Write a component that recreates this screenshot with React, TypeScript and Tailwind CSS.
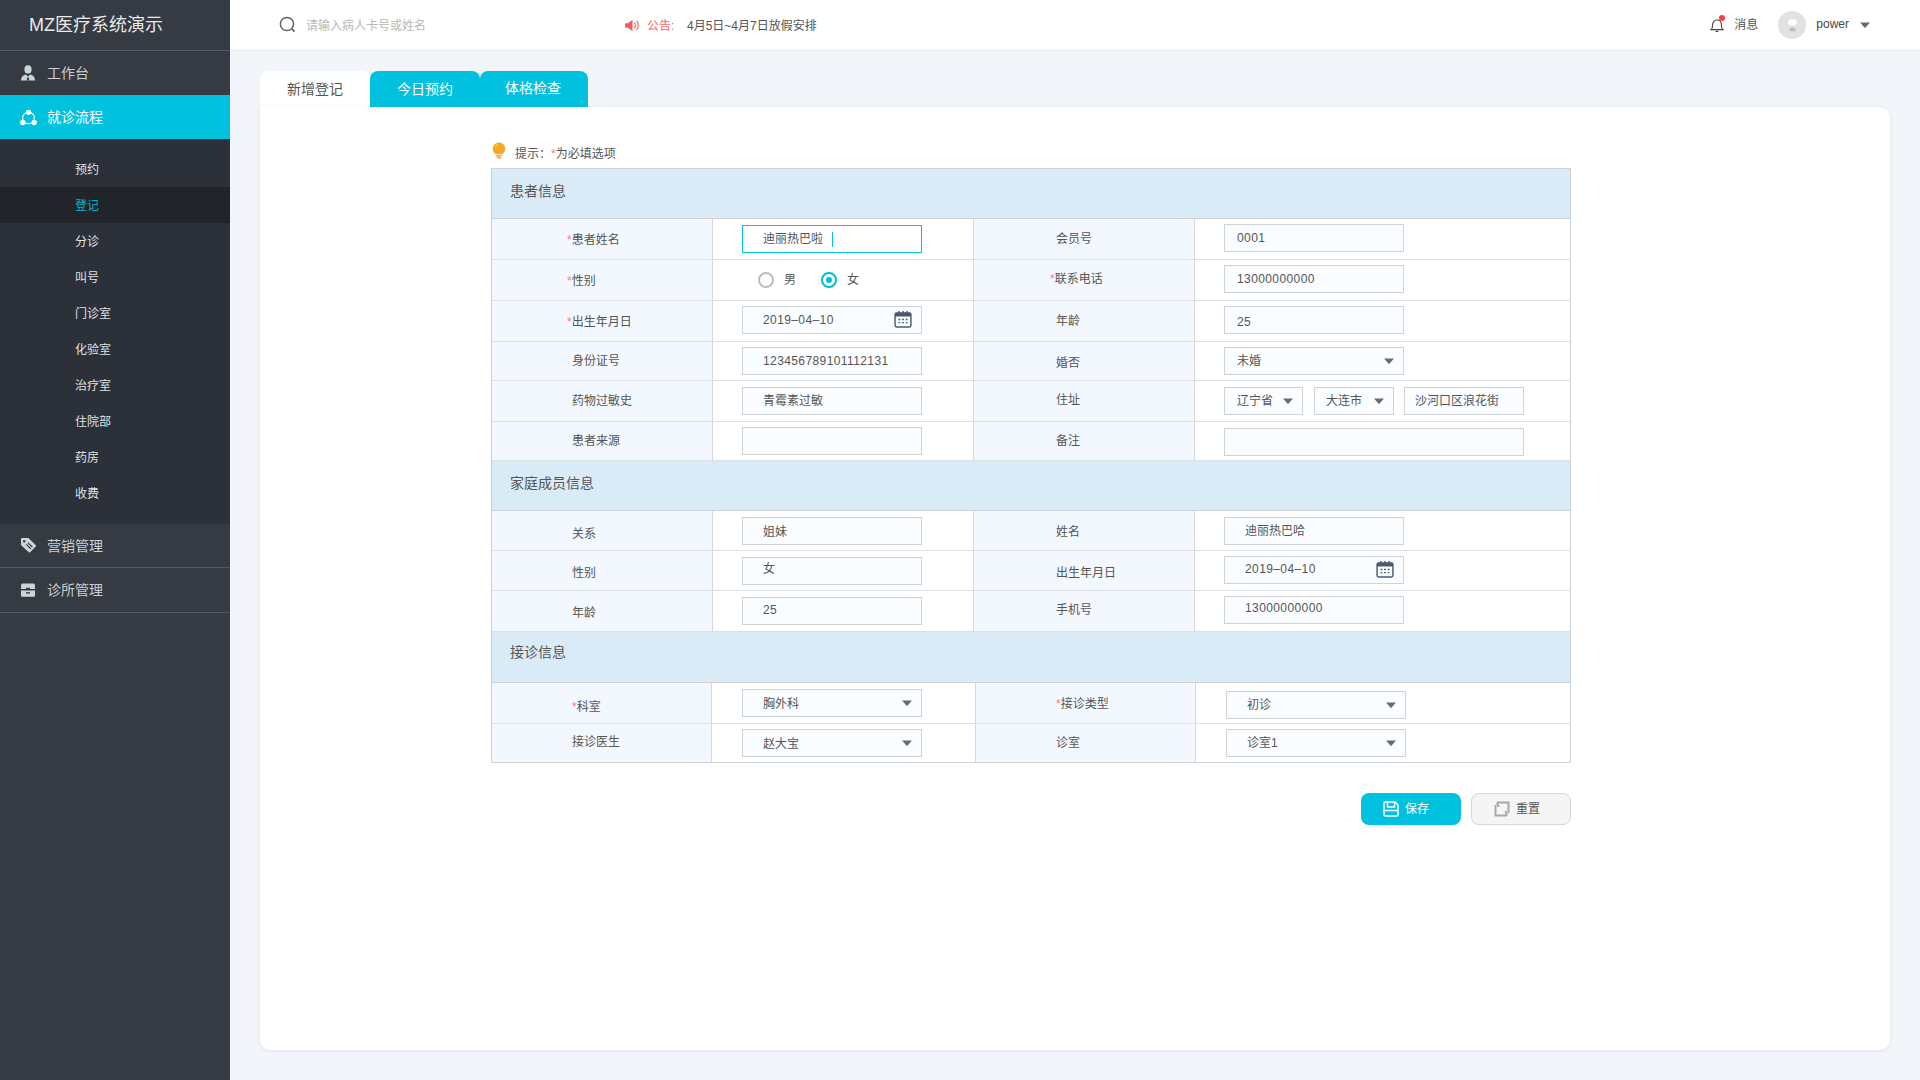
import React from "react";

const FONT = "font-['Liberation_Sans','Noto_Sans_CJK_SC',sans-serif]";

const Caret = ({ className = "" }: { className?: string }) => (
  <svg viewBox="0 0 10 6" className={`h-[6px] w-[10px] ${className}`}>
    <path d="M0 0.5h10L5.6 5.6a.8.8 0 0 1-1.2 0z" fill="#6b6b6b" />
  </svg>
);

const Calendar = () => (
  <svg viewBox="0 0 20 20" className="h-[18px] w-[18px]" fill="none">
    <rect x="1.2" y="3.2" width="17.6" height="15.6" rx="1.6" stroke="#4a5a70" strokeWidth="1.6" />
    <rect x="1.2" y="3.2" width="17.6" height="4" fill="#4a5a70" />
    <path d="M5.5 1v4M10 1v4M14.5 1v4" stroke="#4a5a70" strokeWidth="1.6" />
    <path d="M5 10.5h2M9 10.5h2M13 10.5h2M5 14h2M9 14h2M13 14h2" stroke="#4a5a70" strokeWidth="1.6" />
  </svg>
);

type MainIcon = "user" | "flow" | "tag" | "box";

const SideIcon = ({ name, color }: { name: MainIcon; color: string }) => {
  if (name === "user")
    return (
      <svg viewBox="0 0 16 16" className="h-4 w-4" fill={color}>
        <ellipse cx="8" cy="4.4" rx="3.6" ry="4.2" />
        <path d="M1 15.6c0-3.8 1.800-5.600 4.600-6.200L8 11.400l2.400-2c2.800.6 4.600 2.400 4.600 6.200z" />
        <path d="M7.200 12.400h1.600l.4 3.200H6.800z" fill="#353a43" />
      </svg>
    );
  if (name === "flow")
    return (
      <svg viewBox="0 0 18 17" className="h-[17px] w-[17px]" fill={color}>
        <circle cx="9" cy="9" r="6.200" fill="none" stroke={color} strokeWidth="1.100" />
        <circle cx="9" cy="3" r="2.800" />
        <circle cx="3" cy="13.800" r="2.800" />
        <circle cx="15" cy="13.800" r="2.800" />
      </svg>
    );
  if (name === "tag")
    return (
      <svg viewBox="0 0 17 17" className="h-[17px] w-[17px]">
        <path d="M1 1.800C1 1.300 1.300 1 1.800 1H8c.4 0 .7.1 1 .4l6.800 6.800c.4.4.4 1 0 1.400l-5.600 5.600c-.4.4-1 .4-1.400 0L1.400 8.600C1.100 8.300 1 8 1 7.600z" fill={color} />
        <path d="M8 5.800l4.400 4.400M6.400 7.400l4.400 4.400" stroke="#353a43" strokeWidth="1.200" />
        <circle cx="4.200" cy="4.200" r="1.200" fill="#353a43" />
      </svg>
    );
  return (
    <svg viewBox="0 0 16 16" className="h-4 w-4" fill={color}>
      <path d="M1 3.400C1 2 2 1.400 3 1.400h10c1 0 2 .6 2 2V7H1z" />
      <path d="M1 8.400h14v5c0 .9-.6 1.400-1.400 1.400H2.400C1.600 14.800 1 14.300 1 13.400z" />
      <rect x="6" y="5.800" width="4" height="1.400" fill="#353a43" />
      <rect x="6" y="10.200" width="4" height="1.400" fill="#353a43" />
    </svg>
  );
};

const SubItem = ({ text, active }: { text: string; active?: boolean }) => (
  <div className={`flex h-9 items-center pl-[75px] pt-[1px] text-xs ${active ? "bg-[#212429] text-[#00b5d1]" : "text-[#dfe3e6]"}`}>{text}</div>
);

const NavItem = ({ icon, text, active, border, h }: { icon: MainIcon; text: string; active?: boolean; border?: boolean; h: string }) => (
  <div className={`flex items-center ${h} ${active ? "bg-[#00c1de] text-white" : "text-[#c8d0d2]"} ${border ? "border-b border-[#545963]" : ""}`}>
    <div className="flex w-[47px] justify-start pl-[20px]">
      <SideIcon name={icon} color={active ? "#ffffff" : "#c8d6d6"} />
    </div>
    <span className="text-sm">{text}</span>
  </div>
);

const Sidebar = () => (
  <aside className="flex w-[230px] shrink-0 flex-col bg-[#353a43]">
    <div className="flex h-[51px] items-center border-b border-[#545963] pl-[29px] pt-[1px] text-[18px] text-[#e8eaec]">MZ医疗系统演示</div>
    <NavItem icon="user" text="工作台" h="h-[44px]" />
    <NavItem icon="flow" text="就诊流程" active h="h-[44px]" />
    <div className="bg-[#2c3038] pt-3 pb-[13px]">
      <SubItem text="预约" />
      <SubItem text="登记" active />
      {["分诊", "叫号", "门诊室", "化验室", "治疗室", "住院部", "药房", "收费"].map((t) => (
        <SubItem key={t} text={t} />
      ))}
    </div>
    <NavItem icon="tag" text="营销管理" border h="h-[44px]" />
    <NavItem icon="box" text="诊所管理" border h="h-[45px]" />
  </aside>
);

const Header = () => (
  <header className="flex h-[51px] shrink-0 items-center border-b border-[#e8edf0] bg-white text-xs">
    <svg viewBox="0 0 18 18" className="ml-[49px] h-[18px] w-[18px]" fill="none" stroke="#5f6368">
      <circle cx="8" cy="8" r="6.600" strokeWidth="1.500" />
      <path d="M13 13l2.400 2.600" strokeWidth="1.800" />
    </svg>
    <span className="ml-[9px] w-[319px] translate-y-[1px] text-[#b8b8b8]">请输入病人卡号或姓名</span>
    <svg viewBox="0 0 16 14" className="h-[13px] w-[15px]" fill="#fa5c5c">
      <path d="M0 4.500h3L8 .8v12.400L3 9.500H0z" />
      <path d="M10 3.800c1.500 1.600 1.500 4.800 0 6.400M12.400 2c2.400 2.600 2.400 7.400 0 10" stroke="#fa5c5c" fill="none" strokeWidth="1.200" />
    </svg>
    <span className="ml-[7px] w-[40px] translate-y-[1px] text-[#fa6464]">公告:</span>
    <span className="translate-y-[1px] text-[#555]">4月5日~4月7日放假安排</span>
    <div className="ml-auto flex items-center">
      <div className="relative">
        <svg viewBox="0 0 14 16" className="h-4 w-[14px]" fill="none" stroke="#444">
          <path d="M1 12.600c1.400-1 1.600-2.400 1.600-4.600 0-3 1.800-5 4.400-5s4.400 2 4.400 5c0 2.200.2 3.600 1.600 4.600z" strokeWidth="1.100" />
          <path d="M5.600 14.400h2.800" strokeWidth="1.300" />
        </svg>
        <span className="absolute -right-[1px] -top-[2px] h-[6px] w-[6px] rounded-full bg-[#ff3b46]" />
      </div>
      <span className="ml-[10px] text-[#555]">消息</span>
      <div className="ml-[20px] flex h-[28px] w-[28px] items-center justify-center rounded-full bg-[#e2e2e2]">
        <svg viewBox="0 0 12 16" className="h-[15px] w-[11px]" fill="#ffffff">
          <path d="M1 4.500C1 2.400 3 1.200 6 1.200s5 1.200 5 3.300S9 8.200 6 8.200 1 6.600 1 4.500z" />
          <rect x="3" y="10.400" width="6" height="4" rx="1" fill="#bdbdbd" />
        </svg>
      </div>
      <span className="ml-[10px] -translate-y-[1px] text-[#444]">power</span>
      <Caret className="ml-[11px] mr-[50px]" />
    </div>
  </header>
);

const Star = () => <span className="text-[#fb7a7a]">*</span>;

const Label = ({ text, req, x, dy = "" }: { text: string; req?: boolean; x: string; dy?: string }) => (
  <span className={`${x} ${dy} block whitespace-nowrap`}>
    {req && <Star />}
    {text}
  </span>
);

const inputBase = "flex h-[28px] items-center border text-xs text-[#555]";

const Input = ({ text = "", w = "w-[180px]", pad = "pl-[20px]", dy = "", off = "", digits, arrow, cal, focus }: { text?: string; w?: string; pad?: string; dy?: string; off?: string; digits?: boolean; arrow?: boolean; cal?: boolean; focus?: boolean }) => (
  <div className={`${inputBase} ${w} ${pad} ${off} ${focus ? "border-[#00c1de] bg-white" : "border-[#cfd2d6] bg-[#fafdff]"}`}>
    <span className={`${dy} ${digits ? "tracking-[0.4px]" : ""}`}>{text}</span>
    {focus && <span className="ml-[9px] h-[15px] w-[1px] bg-[#00c1de]" />}
    {cal && (
      <span className="ml-auto mr-[9px] -translate-y-[1px]">
        <Calendar />
      </span>
    )}
    {arrow && <Caret className="ml-auto mr-[9px]" />}
  </div>
);

const Row = ({ l1, v1, l2, v2, h, cols = "a", last }: { l1: React.ReactNode; v1: React.ReactNode; l2: React.ReactNode; v2: React.ReactNode; h: string; cols?: "a" | "b"; last?: boolean }) => {
  const w = cols === "a" ? ["w-[221px]", "w-[261px]", "w-[221px]"] : ["w-[220px]", "w-[264px]", "w-[220px]"];
  const pad = cols === "a" ? "pl-[29px]" : "pl-[30px]";
  return (
    <div className={`flex ${h} text-xs text-[#555] ${last ? "" : "border-b border-[#dcdfe3]"}`}>
      <div className={`${w[0]} flex items-center border-r border-[#d5d8dc] bg-[#f3f8ff]`}>{l1}</div>
      <div className={`${w[1]} ${pad} flex items-center border-r border-[#d5d8dc]`}>{v1}</div>
      <div className={`${w[2]} flex items-center border-r border-[#d5d8dc] bg-[#f3f8ff]`}>{l2}</div>
      <div className={`${pad} flex flex-1 items-center`}>{v2}</div>
    </div>
  );
};

const Section = ({ text, h, pb }: { text: string; h: string; pb: string }) => (
  <div className={`flex ${h} ${pb} items-center border-b border-[#cfd3d7] bg-[#d9ebf7] pl-[18px] text-sm text-[#555]`}>{text}</div>
);

const Radio = ({ on, text, w }: { on?: boolean; text: string; w: string }) => (
  <div className={`flex items-center ${w}`}>
    <span className={`flex h-[16px] w-[16px] items-center justify-center rounded-full border-2 bg-white ${on ? "border-[#00bcd8]" : "border-[#bdbdbd]"}`}>
      {on && <span className="h-[6px] w-[6px] rounded-full bg-[#00bcd8]" />}
    </span>
    <span className="ml-[10px] text-xs text-[#555]">{text}</span>
  </div>
);

const LX = "ml-[75px]";
const LX2 = "ml-[80px]";
const RX = "ml-[82px]";
const RX2 = "ml-[76px]";
const RX3 = "ml-[80px]";
const UP1 = "-translate-y-[1px]";
const DN1 = "translate-y-[1px]";
const DN2 = "translate-y-[2px]";

const Form = () => (
  <div className="w-[1080px] border border-[#cfd2d6] bg-white">
    <Section text="患者信息" h="h-[50px]" pb="pb-[5px]" />
    <Row h="h-[41px]" l1={<Label text="患者姓名" req x={LX} dy={DN1} />} v1={<Input text="迪丽热巴啦" focus />} l2={<Label text="会员号" x={RX} />} v2={<Input text="0001" pad="pl-[12px]" digits off={UP1} />} />
    <Row h="h-[41px]" l1={<Label text="性别" req x={LX} dy={DN1} />} v1={<div className="flex pl-[16px]"><Radio text="男" w="w-[63px]" /><Radio on text="女" w="w-[63px]" /></div>} l2={<Label text="联系电话" req x={RX2} dy={UP1} />} v2={<Input text="13000000000" pad="pl-[12px]" digits off={UP1} />} />
    <Row h="h-[41px]" l1={<Label text="出生年月日" req x={LX} dy={DN1} />} v1={<Input text="2019–04–10" cal digits off={UP1} />} l2={<Label text="年龄" x={RX} />} v2={<Input text="25" pad="pl-[12px]" digits off={UP1} dy={DN2} />} />
    <Row h="h-[39px]" l1={<Label text="身份证号" x={LX2} />} v1={<Input text="123456789101112131" digits />} l2={<Label text="婚否" x={RX} dy={DN2} />} v2={<Input text="未婚" pad="pl-[12px]" arrow />} />
    <Row h="h-[41px]" l1={<Label text="药物过敏史" x={LX2} />} v1={<Input text="青霉素过敏" />} l2={<Label text="住址" x={RX} dy={UP1} />} v2={<div className="flex"><Input text="辽宁省" w="w-[79px]" pad="pl-[12px]" arrow /><div className="ml-[11px]"><Input text="大连市" w="w-[80px]" pad="pl-[11px]" arrow /></div><div className="ml-[10px]"><Input text="沙河口区浪花街" w="w-[120px]" pad="pl-[10px]" /></div></div>} />
    <Row h="h-[39px]" l1={<Label text="患者来源" x={LX2} />} v1={<Input />} l2={<Label text="备注" x={RX} />} v2={<Input w="w-[300px]" off={DN1} />} />
    <Section text="家庭成员信息" h="h-[50px]" pb="pb-[5px]" />
    <Row h="h-[40px]" l1={<Label text="关系" x={LX2} dy="translate-y-[3px]" />} v1={<Input text="姐妹" dy={DN1} />} l2={<Label text="姓名" x={RX} dy={DN1} />} v2={<Input text="迪丽热巴哈" />} />
    <Row h="h-[40px]" l1={<Label text="性别" x={LX2} dy={DN2} />} v1={<Input text="女" dy="-translate-y-[2px]" />} l2={<Label text="出生年月日" x={RX} dy={DN2} />} v2={<Input text="2019–04–10" cal digits off={UP1} dy={UP1} />} />
    <Row h="h-[41px]" l1={<Label text="年龄" x={LX2} dy={DN2} />} v1={<Input text="25" digits dy={UP1} />} l2={<Label text="手机号" x={RX} dy={UP1} />} v2={<Input text="13000000000" digits off={UP1} dy="-translate-y-[2px]" />} />
    <Section text="接诊信息" h="h-[51px]" pb="pb-[10px]" />
    <Row cols="b" h="h-[41px]" l1={<Label text="科室" req x={LX2} dy="translate-y-[4px]" />} v1={<Input text="胸外科" arrow dy={DN1} />} l2={<Label text="接诊类型" req x={RX3} dy={DN1} />} v2={<Input text="初诊" arrow off={DN2} />} />
    <Row cols="b" h="h-[38px]" l1={<Label text="接诊医生" x={LX2} dy={UP1} />} v1={<Input text="赵大宝" arrow dy={DN1} />} l2={<Label text="诊室" x={RX3} />} v2={<Input text="诊室1" arrow />} last />
  </div>
);

const Buttons = () => (
  <div className="mt-[30px] flex w-[1080px] justify-end gap-[10px] text-xs">
    <button className="flex h-[32px] w-[100px] items-center rounded-lg bg-[#00c1de] pl-[22px] text-white">
      <svg viewBox="0 0 16 16" className="h-4 w-4" fill="none" stroke="#fff" strokeWidth="1.500">
        <path d="M2.500 1H12l3 3v9.500c0 .8-.7 1.500-1.500 1.500h-11C1.700 15 1 14.300 1 13.500v-11C1 1.700 1.700 1 2.500 1z" />
        <path d="M4.500 1v5h7V1M1 9.500h14" />
      </svg>
      <span className="ml-[6px]">保存</span>
    </button>
    <button className="flex h-[32px] w-[100px] items-center rounded-lg border border-[#d5d5d5] bg-[#f5f5f6] pl-[22px] text-[#555]">
      <svg viewBox="0 0 16 16" className="h-4 w-4" fill="none" stroke="#a8a8a8" strokeWidth="2">
        <path d="M3 1.500h11.500V12" />
        <path d="M3 1.500L4.500 6M1.500 4v10.500H13" />
        <path d="M13 14.500L11.500 10" />
      </svg>
      <span className="ml-[6px]">重置</span>
    </button>
  </div>
);

export default function App() {
  return (
    <div className={`flex h-screen w-full overflow-hidden ${FONT}`}>
      <Sidebar />
      <div className="flex min-w-0 flex-1 flex-col bg-[#f2f6fa]">
        <Header />
        <div className="flex flex-1 flex-col px-[30px] pt-5 pb-[30px]">
          <div className="flex h-[36px] text-sm">
            <div className="flex w-[110px] items-center justify-center rounded-t-[8px] bg-white text-[#555]">新增登记</div>
            <div className="flex w-[110px] items-center justify-center rounded-t-[8px] bg-[#00c1de] text-white">今日预约</div>
            <div className="flex w-[108px] items-center justify-center rounded-t-[8px] bg-[#00c1de] pr-[2px] text-white">
              <span className="-translate-y-[1px]">体格检查</span>
            </div>
          </div>
          <div className="flex-1 rounded-b-[10px] rounded-tr-[10px] bg-white pl-[231px] shadow-[0_1px_4px_rgba(0,0,0,0.08)]">
            <div className="flex h-[61px] items-end pb-[8px] text-xs text-[#555]">
              <svg viewBox="0 0 14 17" className="mb-[1px] ml-[1px] h-[17px] w-[14px]">
                <path d="M7 .5A6.300 6.300 0 0 0 .7 6.800c0 2.500 1.600 3.600 2.400 5.200h7.800c.8-1.600 2.400-2.700 2.400-5.200A6.300 6.300 0 0 0 7 .5z" fill="#f7a823" />
                <path d="M3.500 4.500c.6-1 1.300-1.500 2.400-1.800" stroke="#ffe3a8" fill="none" />
                <rect x="3.800" y="12.800" width="6.400" height="1.600" rx=".8" fill="#f7a823" />
                <rect x="4.800" y="15" width="4.400" height="1.600" rx=".8" fill="#f7a823" />
              </svg>
              <span className="ml-[9px] translate-y-[2px]">提示：<Star />为必填选项</span>
            </div>
            <Form />
            <Buttons />
          </div>
        </div>
      </div>
    </div>
  );
}
